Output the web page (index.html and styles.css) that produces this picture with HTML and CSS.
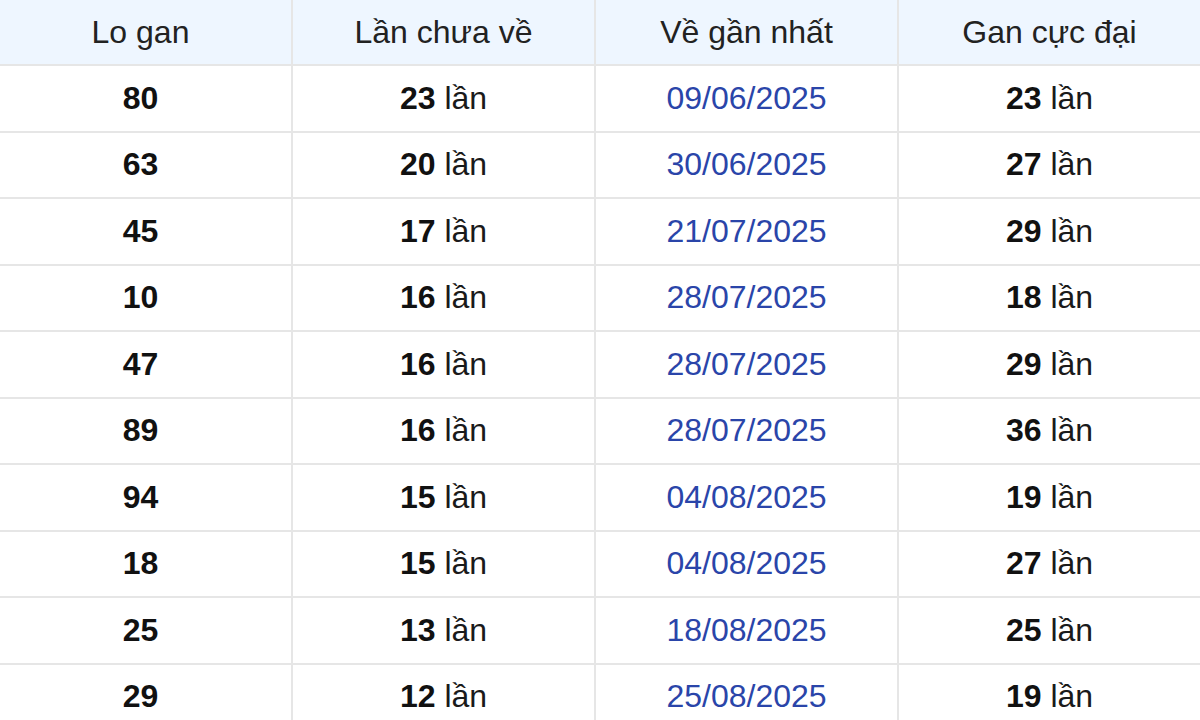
FILE: index.html
```html
<!DOCTYPE html>
<html lang="vi">
<head>
<meta charset="utf-8">
<title>Lo gan</title>
<link rel="stylesheet" href="styles.css">
</head>
<body>
<table class="gan-table">
  <thead>
    <tr><th>Lo gan</th><th>Lần chưa về</th><th>Về gần nhất</th><th>Gan cực đại</th></tr>
  </thead>
  <tbody>
    <tr><td><b>80</b></td><td><b>23</b> lần</td><td class="date">09/06/2025</td><td><b>23</b> lần</td></tr>
    <tr><td><b>63</b></td><td><b>20</b> lần</td><td class="date">30/06/2025</td><td><b>27</b> lần</td></tr>
    <tr><td><b>45</b></td><td><b>17</b> lần</td><td class="date">21/07/2025</td><td><b>29</b> lần</td></tr>
    <tr><td><b>10</b></td><td><b>16</b> lần</td><td class="date">28/07/2025</td><td><b>18</b> lần</td></tr>
    <tr><td><b>47</b></td><td><b>16</b> lần</td><td class="date">28/07/2025</td><td><b>29</b> lần</td></tr>
    <tr><td><b>89</b></td><td><b>16</b> lần</td><td class="date">28/07/2025</td><td><b>36</b> lần</td></tr>
    <tr><td><b>94</b></td><td><b>15</b> lần</td><td class="date">04/08/2025</td><td><b>19</b> lần</td></tr>
    <tr><td><b>18</b></td><td><b>15</b> lần</td><td class="date">04/08/2025</td><td><b>27</b> lần</td></tr>
    <tr><td><b>25</b></td><td><b>13</b> lần</td><td class="date">18/08/2025</td><td><b>25</b> lần</td></tr>
    <tr><td><b>29</b></td><td><b>12</b> lần</td><td class="date">25/08/2025</td><td><b>19</b> lần</td></tr>
  </tbody>
</table>
</body>
</html>
```
FILE: styles.css
```css
html, body {
  margin: 0;
  padding: 0;
  background: #ffffff;
  overflow: hidden;
}
body {
  font-family: "Liberation Sans", Arial, sans-serif;
  font-size: 32px;
  color: #1a1a1a;
}
.gan-table {
  border-collapse: collapse;
  table-layout: fixed;
  width: 1214px;
  margin-left: -12px;
}
.gan-table th,
.gan-table td {
  border: 2px solid #e6e6e6;
  text-align: center;
  vertical-align: middle;
  padding: 0;
}
.gan-table thead tr {
  height: 65px;
}
.gan-table th {
  border-top: none;
  background: #eef6ff;
  font-weight: normal;
  color: #222222;
}
.gan-table tbody tr {
  height: 66.5px;
}
.gan-table td b {
  font-weight: bold;
  color: #111111;
}
.gan-table td.date {
  color: #2a45a9;
}
```
